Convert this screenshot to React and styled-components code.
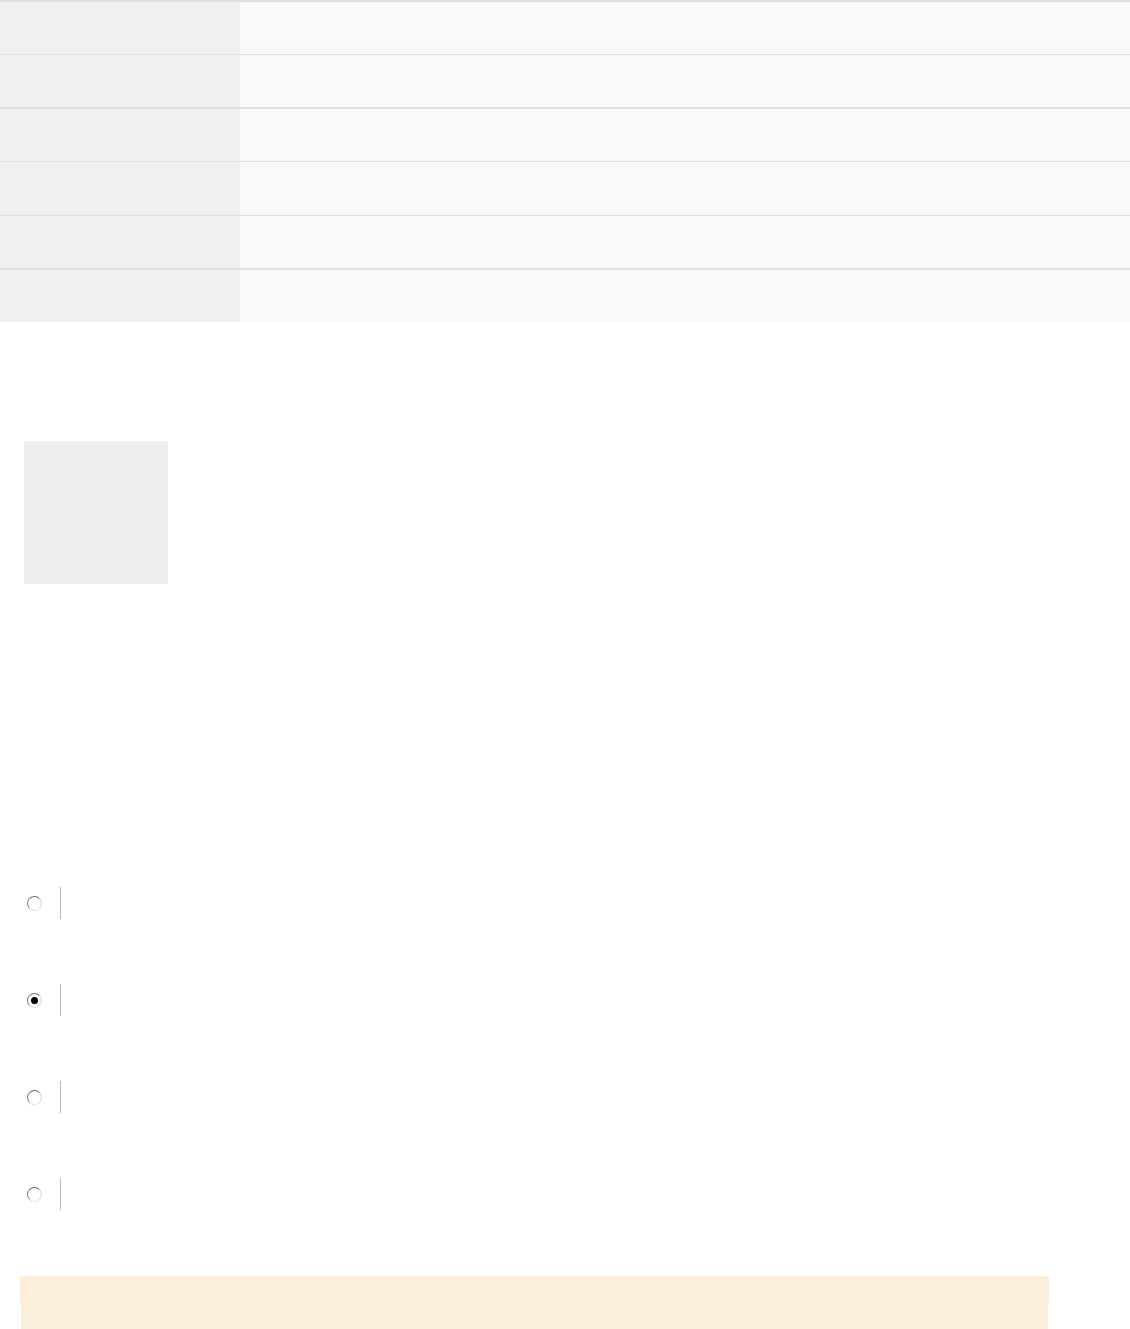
import React from "react";
import styled, { createGlobalStyle } from "styled-components";

const GlobalStyle = createGlobalStyle`
  html, body {
    margin: 0;
    padding: 0;
    background: #ffffff;
    font-family: "Liberation Sans", Arial, sans-serif;
  }
  *, *::before, *::after {
    box-sizing: border-box;
  }
`;

const Page = styled.div`
  width: 1130px;
  height: 1329px;
  overflow: hidden;
  display: flex;
  flex-direction: column;

  & > * {
    flex-shrink: 0;
  }
`;

const Table = styled.div`
  display: flex;
  flex-direction: column;
  width: 100%;
`;

const Row = styled.div`
  display: grid;
  grid-template-columns: 240px 1fr;
  height: ${(p) => p.$h}px;
  border-top: ${(p) => p.$line}px solid ${(p) => (p.$line > 1 ? "#dde1e6" : "#dedfe3")};
`;

const Label = styled.div`
  background-color: #f0f0f0;
`;

const Value = styled.div`
  background-color: #f9f9f9;
`;

const Thumb = styled.div`
  width: 144px;
  height: 143px;
  margin-top: 119px;
  margin-left: 24px;
  background-color: #efefef;
`;

const Options = styled.div`
  display: flex;
  flex-direction: column;
  gap: 65px;
  margin-top: 303px;
  padding-left: 27px;
`;

const Option = styled.label`
  display: flex;
  align-items: center;
  height: 32px;
`;

const Radio = styled.span`
  width: 15px;
  height: 15px;
  border-radius: 50%;
  border: 1px solid;
  border-color: #6f6f6f #d6d6d6 #e2e2e2 #808080;
  background: #ffffff;
  display: flex;
  align-items: center;
  justify-content: center;

  &::after {
    content: "";
    width: 7px;
    height: 7px;
    border-radius: 50%;
    background: ${(p) => (p.$checked ? "#000000" : "transparent")};
  }
`;

const Divider = styled.span`
  width: 1px;
  height: 32px;
  margin-left: 18px;
  background-color: #bbbbbb;
`;

const Notice = styled.div`
  margin-top: 66px;
  margin-left: 20px;
  width: 1029px;
  display: flex;
  flex-direction: column;
`;

const NoticeTop = styled.div`
  height: 27px;
  background-color: #fbeedb;
`;

const NoticeBody = styled.div`
  height: 26px;
  margin: 0 1px;
  background-color: #fbeedb;
`;

const rows = [
  { line: 2, h: 54 },
  { line: 1, h: 53 },
  { line: 2, h: 54 },
  { line: 1, h: 54 },
  { line: 1, h: 53 },
  { line: 2, h: 54 },
];

const options = [false, true, false, false];

function App() {
  return (
    <Page>
      <GlobalStyle />
      <Table>
        {rows.map((r, i) => (
          <Row key={i} $line={r.line} $h={r.h}>
            <Label />
            <Value />
          </Row>
        ))}
      </Table>
      <Thumb />
      <Options>
        {options.map((checked, i) => (
          <Option key={i}>
            <Radio $checked={checked} />
            <Divider />
          </Option>
        ))}
      </Options>
      <Notice>
        <NoticeTop />
        <NoticeBody />
      </Notice>
    </Page>
  );
}

export default App;
